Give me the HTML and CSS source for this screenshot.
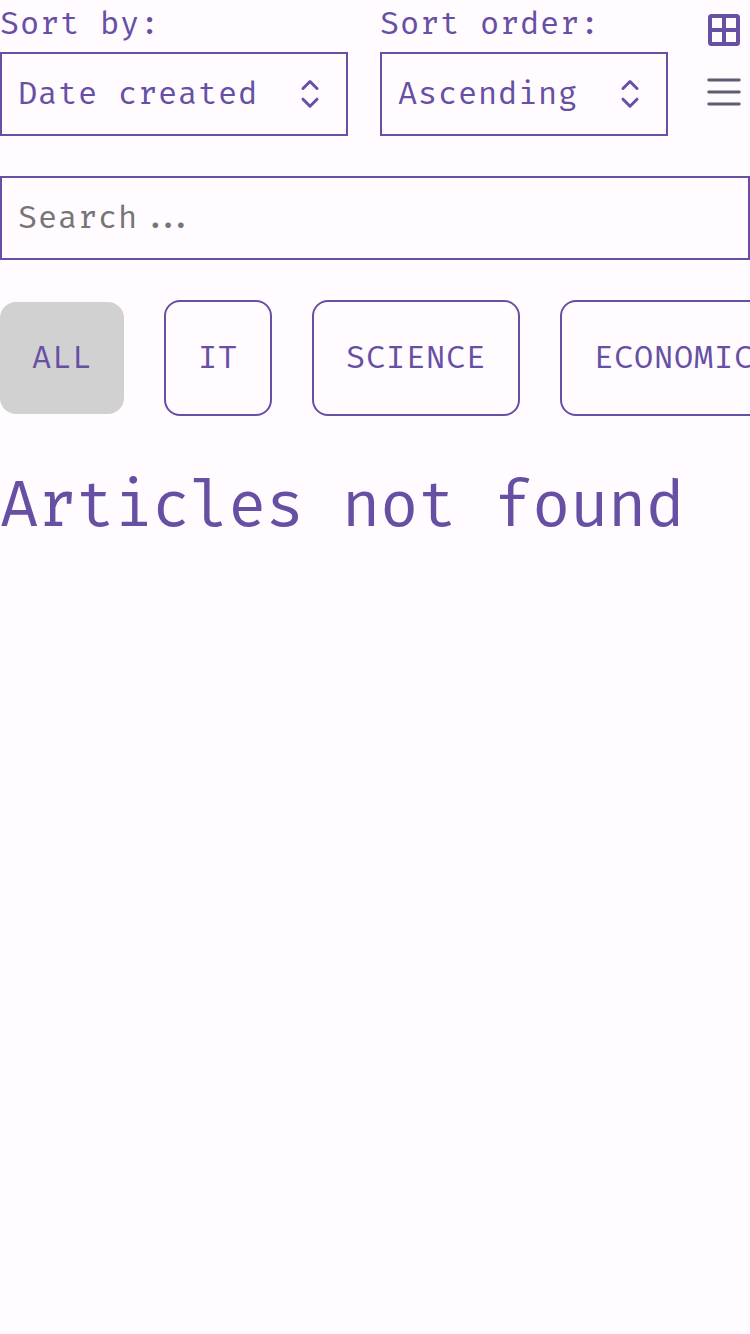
FILE: index.html
```html
<!DOCTYPE html>
<html lang="en">
<head>
<meta charset="utf-8">
<title>Articles</title>
<link rel="stylesheet" href="styles.css">
</head>
<body>
<main class="page">
  <header class="toolbar">
    <div class="field field-sort">
      <span class="label">Sort by:</span>
      <div class="select" role="button" tabindex="0">
        <span class="value">Date created</span>
        <svg class="chevrons" viewBox="0 0 20 32"><path d="M3 10.5 10 3.5 17 10.5M3 21.2 10 28.2 17 21.2"/></svg>
      </div>
    </div>
    <div class="field field-order">
      <span class="label">Sort order:</span>
      <div class="select" role="button" tabindex="0">
        <span class="value">Ascending</span>
        <svg class="chevrons" viewBox="0 0 20 32"><path d="M3 10.5 10 3.5 17 10.5M3 21.2 10 28.2 17 21.2"/></svg>
      </div>
    </div>
    <div class="views">
      <svg class="view view-grid" viewBox="0 0 34 34"><rect x="3" y="3" width="28" height="28" rx="1.5"/><path d="M17 3V31M3 17H31"/></svg>
      <svg class="view view-list" viewBox="0 0 34 34"><path d="M1.7 5H32.3M1.7 17H32.3M1.7 29H32.3"/></svg>
    </div>
  </header>
  <div class="search" role="searchbox" tabindex="0">Search<span class="dots">...</span></div>
  <nav class="tabs">
    <div class="tab tab-active">ALL</div>
    <div class="tab">IT</div>
    <div class="tab">SCIENCE</div>
    <div class="tab">ECONOMICS</div>
  </nav>
  <h1 class="empty">Articles not found</h1>
</main>
</body>
</html>
```

FILE: styles.css
```css
* { box-sizing: border-box; }

body {
  margin: 0;
  background: #fffbff;
  color: #6750a4;
  font: 31.2px/48px "Fira Code", "DejaVu Sans Mono", monospace;
  letter-spacing: 0.8px;
}

.page {
  width: 100%;
  min-height: 1334px;
  overflow: hidden;
}

.toolbar {
  display: flex;
  gap: 32px;
}

.field {
  display: flex;
  flex-direction: column;
  gap: 3px;
}

.field-sort { width: 348px; }
.field-order { width: 288px; }

.label {
  padding-top: 1px;
  white-space: nowrap;
}

.select {
  display: flex;
  align-items: center;
  justify-content: space-between;
  height: 84px;
  padding: 0 26px 0 16px;
  border: 2px solid #6750a4;
  white-space: nowrap;
}

.value { padding-top: 2px; }

.chevrons {
  width: 20px;
  height: 32px;
  fill: none;
  stroke: #6750a4;
  stroke-width: 3;
  stroke-linecap: round;
  stroke-linejoin: round;
}

.views {
  display: flex;
  flex-direction: column;
  gap: 28px;
  padding: 13px 0 0 7px;
}

.view {
  width: 34px;
  height: 34px;
  fill: none;
}

.view-grid {
  stroke: #6750a4;
  stroke-width: 4;
}

.view-list {
  stroke: #625b71;
  stroke-width: 2.8;
  stroke-linecap: round;
}

.search {
  display: flex;
  align-items: center;
  height: 84px;
  margin-top: 40px;
  padding: 2px 16px 0;
  border: 2px solid #6750a4;
  color: #757575;
}

.dots {
  margin-left: 7.9px;
  letter-spacing: -6.5px;
}

.tabs {
  display: flex;
  align-items: center;
  gap: 40px;
  margin-top: 40px;
}

.tab {
  flex: none;
  padding: 33px 32px 31px;
  border: 2px solid #6750a4;
  border-radius: 16px;
}

.tab-active {
  border: 0;
  background: #d1d1d1;
}

.empty {
  margin: 51px 0 0;
  font-size: 62.4px;
  font-weight: 400;
  line-height: 80px;
  letter-spacing: -0.4px;
  white-space: nowrap;
}
```
